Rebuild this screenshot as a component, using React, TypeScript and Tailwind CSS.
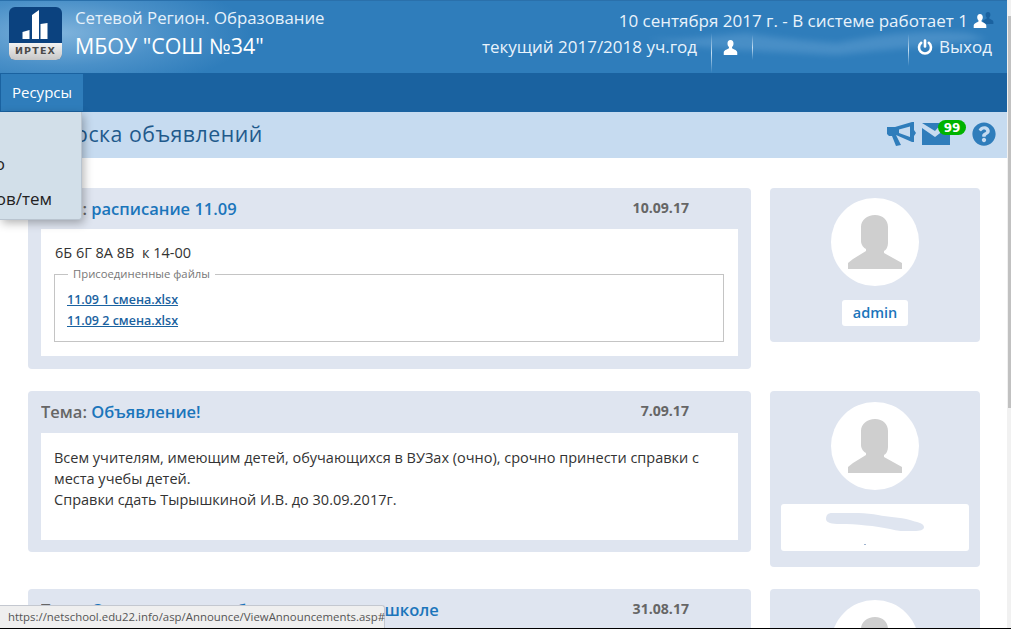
import { FaQuestionCircle } from "react-icons/fa";

const font = "font-['Open_Sans','Noto_Sans',sans-serif]";
const sep = "w-px bg-[linear-gradient(transparent,#c4def2,transparent)]";

function Glyph({ className }: { className: string }) {
  return (
    <svg viewBox="0 0 16 16" className={className} fill="currentColor">
      <path d="M8 0C5.900 0 4.800 1.500 4.800 3.600c0 1.400.5 2.800 1.400 3.700.3.4.3 1 0 1.400C5 9.900 1 10.500.8 13.200V16h14.400v-2.800c-.2-2.700-4.200-3.300-5.400-4.500-.3-.4-.3-1 0-1.400.9-.9 1.400-2.300 1.400-3.700C11.200 1.500 10.100 0 8 0z" />
    </svg>
  );
}

function Avatar() {
  return (
    <div className="flex h-[88px] w-[88px] items-center justify-center rounded-full bg-white">
      <svg viewBox="0 0 54 54" className="h-[54px] w-[54px]" fill="#cfcfcf">
        <path d="M27 0c8 0 13 5 13 12v16c0 4-2 7-4 8v2l18 10v6H0v-6l5-4 13-8v-2c-2-1-5-4-5-8V12C13 5 19 0 27 0z" />
      </svg>
    </div>
  );
}

function Card({
  subject,
  date,
  children,
  height,
  body,
}: {
  subject: React.ReactNode;
  date: string;
  children: React.ReactNode;
  height: string;
  body: string;
}) {
  return (
    <div className={`flex w-[723px] shrink-0 flex-col rounded-[4px] bg-[#dfe5f0] ${height}`}>
      <div className="flex h-[41px] shrink-0 items-center px-[13px]">
        <div className="mt-px w-[590px] truncate text-[16.500px] font-semibold text-[#666]">{subject}</div>
        <div className="-mt-px w-[58px] text-right text-[14.100px] font-bold whitespace-nowrap text-[#666]">{date}</div>
      </div>
      <div className={`mx-[13px] flex-1 bg-white pr-[14px] pl-[13px] ${body}`}>{children}</div>
    </div>
  );
}

export default function App() {
  return (
    <div className={`relative h-[629px] w-[1011px] overflow-hidden bg-white ${font}`}>
      <div className="mr-[4px]">
        <header className="relative flex h-[73px] items-start justify-between overflow-hidden border-t border-[#2a70ab] bg-[#2f7dbb] bg-[radial-gradient(ellipse_190px_60px_at_60px_32px,#7fb3dc_0%,#4a90c8_55%,transparent_100%)] pr-[15px] pl-[9px] text-white">
          <svg viewBox="0 0 340 40" className="absolute top-[24px] right-[20px] h-[40px] w-[340px] opacity-40 blur-[3px]" fill="#6fa9d8">
            <path d="M0 14C40 16 70 10 100 8c20 4 60 8 90 10 40-8 80-14 130-10l20 6c-60 8-100 10-150 16C130 26 60 26 0 14z" />
          </svg>
          <div className="relative flex items-start">
            <div className="relative mt-[6px] h-[53px] w-[53px] overflow-hidden rounded-[6px] bg-[#0b427f]">
              <svg viewBox="0 0 53 36" className="absolute top-0 left-0 h-[36px] w-[53px]" fill="white">
                <path d="M13.500 25l7-2v9h-7zM23 8l7-5v29h-7zM31.500 17l7-1v16h-7z" />
              </svg>
              <div className="absolute right-0 bottom-0 left-0 flex h-[17px] items-center justify-center bg-[linear-gradient(#f3f3f3,#c6c6c6)] font-['DejaVu_Sans',sans-serif] text-[9.500px] font-bold tracking-[1.200px] text-[#4a4a4a]">
                ИРТЕХ
              </div>
            </div>
            <div className="ml-[13px]">
              <div className="mt-[6px] text-[16.800px] leading-[22px] whitespace-nowrap text-[#e6f1fa]">Сетевой Регион. Образование</div>
              <div className="mt-[4px] text-[21.400px] leading-[26px] font-medium whitespace-nowrap">МБОУ "СОШ №34"</div>
            </div>
          </div>
          <div className="relative flex flex-col items-end text-[#e9f3fb]">
            <div className="mt-[8px] flex h-[24px] items-center text-[17px] whitespace-nowrap">
              10 сентября 2017 г. - В системе работает 1
              <span className="relative ml-[5px] h-[14px] w-[19px]">
                <Glyph className="absolute top-[-3px] left-[9px] h-[14px] w-[12px] text-[#1a62a0]" />
                <Glyph className="absolute top-0 left-0 h-[14px] w-[14px] text-white" />
              </span>
            </div>
            <div className="mt-px flex h-[26px] items-center text-[17px] whitespace-nowrap">
              <span>текущий 2017/2018 уч.год</span>
              <span className={`mt-[12px] ml-[14px] h-[40px] ${sep}`} />
              <Glyph className="mr-[14px] ml-[11px] h-[15px] w-[15px] text-white" />
              <span className={`h-[25px] ${sep}`} />
              <span className={`mt-[6px] ml-[155px] h-[32px] ${sep}`} />
              <svg viewBox="0 0 16 16" className="mr-[6px] ml-[8px] h-[16px] w-[16px]" fill="none" stroke="white" strokeWidth="2.600" strokeLinecap="round">
                <path d="M8 1.500v6" />
                <path d="M4.200 3.800a6 6 0 1 0 7.600 0" />
              </svg>
              <span className="font-medium">Выход</span>
            </div>
          </div>
        </header>

        <nav className="flex h-[39px] items-end bg-[#1a62a0]">
          <div className="mb-px ml-px flex h-[37px] w-[82px] items-center justify-center bg-[#2f7dbb] text-[15px] text-white">Ресурсы</div>
        </nav>

        <div className="flex h-[46px] items-center justify-between bg-[#c6dbf0] pr-[11px] pl-[60px]">
          <div className="-mt-[2px] text-[21.300px] tracking-[0.5px] text-[#1f5a8c]">Доска объявлений</div>
          <div className="-mt-[2px] flex items-center text-[#2f7dbb]">
            <svg viewBox="0 0 29 24" className="-ml-px h-[24px] w-[29px]" fill="currentColor" fillRule="evenodd">
              <path d="M0 5h8L25 0h2v8l2 3-2 3v6h-2L9 13l5 10-5 1-4-10H2l-2-2zM12 7.500v3.500l11 4V4.500z" />
            </svg>
            <div className="relative ml-[6px] h-[22px] w-[28px]">
              <svg viewBox="0 0 28 22" className="h-[22px] w-[28px]" fill="currentColor">
                <path d="M0 0h20L13 8 0 0zM0 5l13 9 9-7h6v15H0z" />
              </svg>
              <span className="absolute top-[-3px] left-[16px] flex h-[15px] w-[28px] items-center justify-center rounded-full bg-[#00b300] font-['DejaVu_Sans',sans-serif] text-[12px] font-bold text-white">
                99
              </span>
            </div>
            <FaQuestionCircle className="ml-[22px] h-[24px] w-[24px]" />
          </div>
        </div>

        <main className="flex flex-col gap-[22px] pt-[30px] pl-[28px]">
          <section className="flex items-start gap-[19px]">
            <Card
              height="h-[181px]"
              body="mb-[13px]"
              date="10.09.17"
              subject={
                <>
                  Тема: <span className="text-[#1b75bb]">расписание 11.09</span>
                </>
              }
            >
              <p className="pt-[13px] pl-px text-[14.500px] leading-[22px] whitespace-pre text-[#333]">6Б 6Г 8А 8В  к 14-00</p>
              <fieldset className="mt-[3px] h-[75px] border border-[#c4c4c4] px-[12px]">
                <legend className="ml-px px-[5px] text-[11.300px] leading-[14px] text-[#777]">Присоединенные файлы</legend>
                <a className="mt-[8px] block text-[12.500px] leading-[21px] font-semibold text-[#1a62a0] underline">11.09 1 смена.xlsx</a>
                <a className="block text-[12.500px] leading-[21px] font-semibold text-[#1a62a0] underline">11.09 2 смена.xlsx</a>
              </fieldset>
            </Card>
            <aside className="flex h-[154px] w-[210px] flex-col items-center rounded-[4px] bg-[#dfe5f0] pt-[10px]">
              <Avatar />
              <div className="mt-[14px] flex h-[26px] w-[66px] items-center justify-center rounded-[3px] bg-white text-[14.500px] font-semibold text-[#1b75bb]">admin</div>
            </aside>
          </section>

          <section className="flex items-start gap-[19px]">
            <Card
              height="h-[161px]"
              body="mt-px mb-[12px]"
              date="7.09.17"
              subject={
                <>
                  Тема: <span className="text-[#1b75bb]">Объявление!</span>
                </>
              }
            >
              <p className="pt-[14px] text-[14.500px] leading-[21px] text-[#333]">
                Всем учителям, имеющим детей, обучающихся в ВУЗах (очно), срочно принести справки с места учебы детей.
                <br />
                Справки сдать Тырышкиной И.В. до 30.09.2017г.
              </p>
            </Card>
            <aside className="flex h-[176px] w-[210px] flex-col items-center rounded-[4px] bg-[#dfe5f0] pt-[11px]">
              <Avatar />
              <div className="relative mt-[14px] flex h-[47px] w-[188px] justify-center rounded-[3px] bg-white pt-[9px]">
                <svg viewBox="0 0 98 18" className="h-[18px] w-[98px]" fill="#dfe5f0">
                  <path d="M6 0C20-1 40 0 52 2c10 2 22 2 32 5 6 2 14 3 14 7 0 3-4 4-10 4-8 1-16 0-24-2C50 13 30 11 14 11 6 11 0 10 0 6s2-6 6-6z" />
                </svg>
                <span className="absolute top-[40px] left-[83px] h-px w-[2px] bg-[#9fb4d0]" />
              </div>
            </aside>
          </section>

          <section className="flex items-start gap-[19px]">
            <Card
              height="h-[161px]"
              body="mb-[12px]"
              date="31.08.17"
              subject={
                <>
                  Тема: <span className="text-[#1b75bb]">Организация учебного процесса в школе</span>
                </>
              }
            >
              <span />
            </Card>
            <aside className="flex h-[176px] w-[210px] flex-col items-center rounded-[4px] bg-[#dfe5f0] pt-[11px]">
              <Avatar />
            </aside>
          </section>
        </main>
      </div>

      <div className="absolute top-[112px] left-0 h-[108px] w-[82px] overflow-hidden rounded-br-[3px] border-r border-b border-[#b9c4cf] bg-[#d2dfe9] text-[17px] text-[#222] shadow-[2px_3px_10px_rgba(0,0,0,0.3)]">
        <div className="absolute top-[39px] right-[76px] whitespace-nowrap">Портфолио</div>
        <div className="absolute top-[74px] right-[29px] whitespace-nowrap">Список бланков/тем</div>
      </div>

      <div className="absolute top-0 right-0 h-[628px] w-[4px] bg-[#f1f1f1]">
        <div className="absolute top-[16px] right-0 h-[392px] w-[3px] bg-[#c1c1c1]" />
      </div>

      <div className="absolute bottom-px left-0 flex h-[23px] w-[385px] items-center rounded-tr-[3px] border-t border-r border-[#c4c8d0] bg-[#efefef] pl-[8px] text-[11.400px] whitespace-nowrap text-[#555]">
        https://netschool.edu22.info/asp/Announce/ViewAnnouncements.asp#
      </div>
      <div className="absolute bottom-0 left-0 h-px w-full bg-black" />
    </div>
  );
}
